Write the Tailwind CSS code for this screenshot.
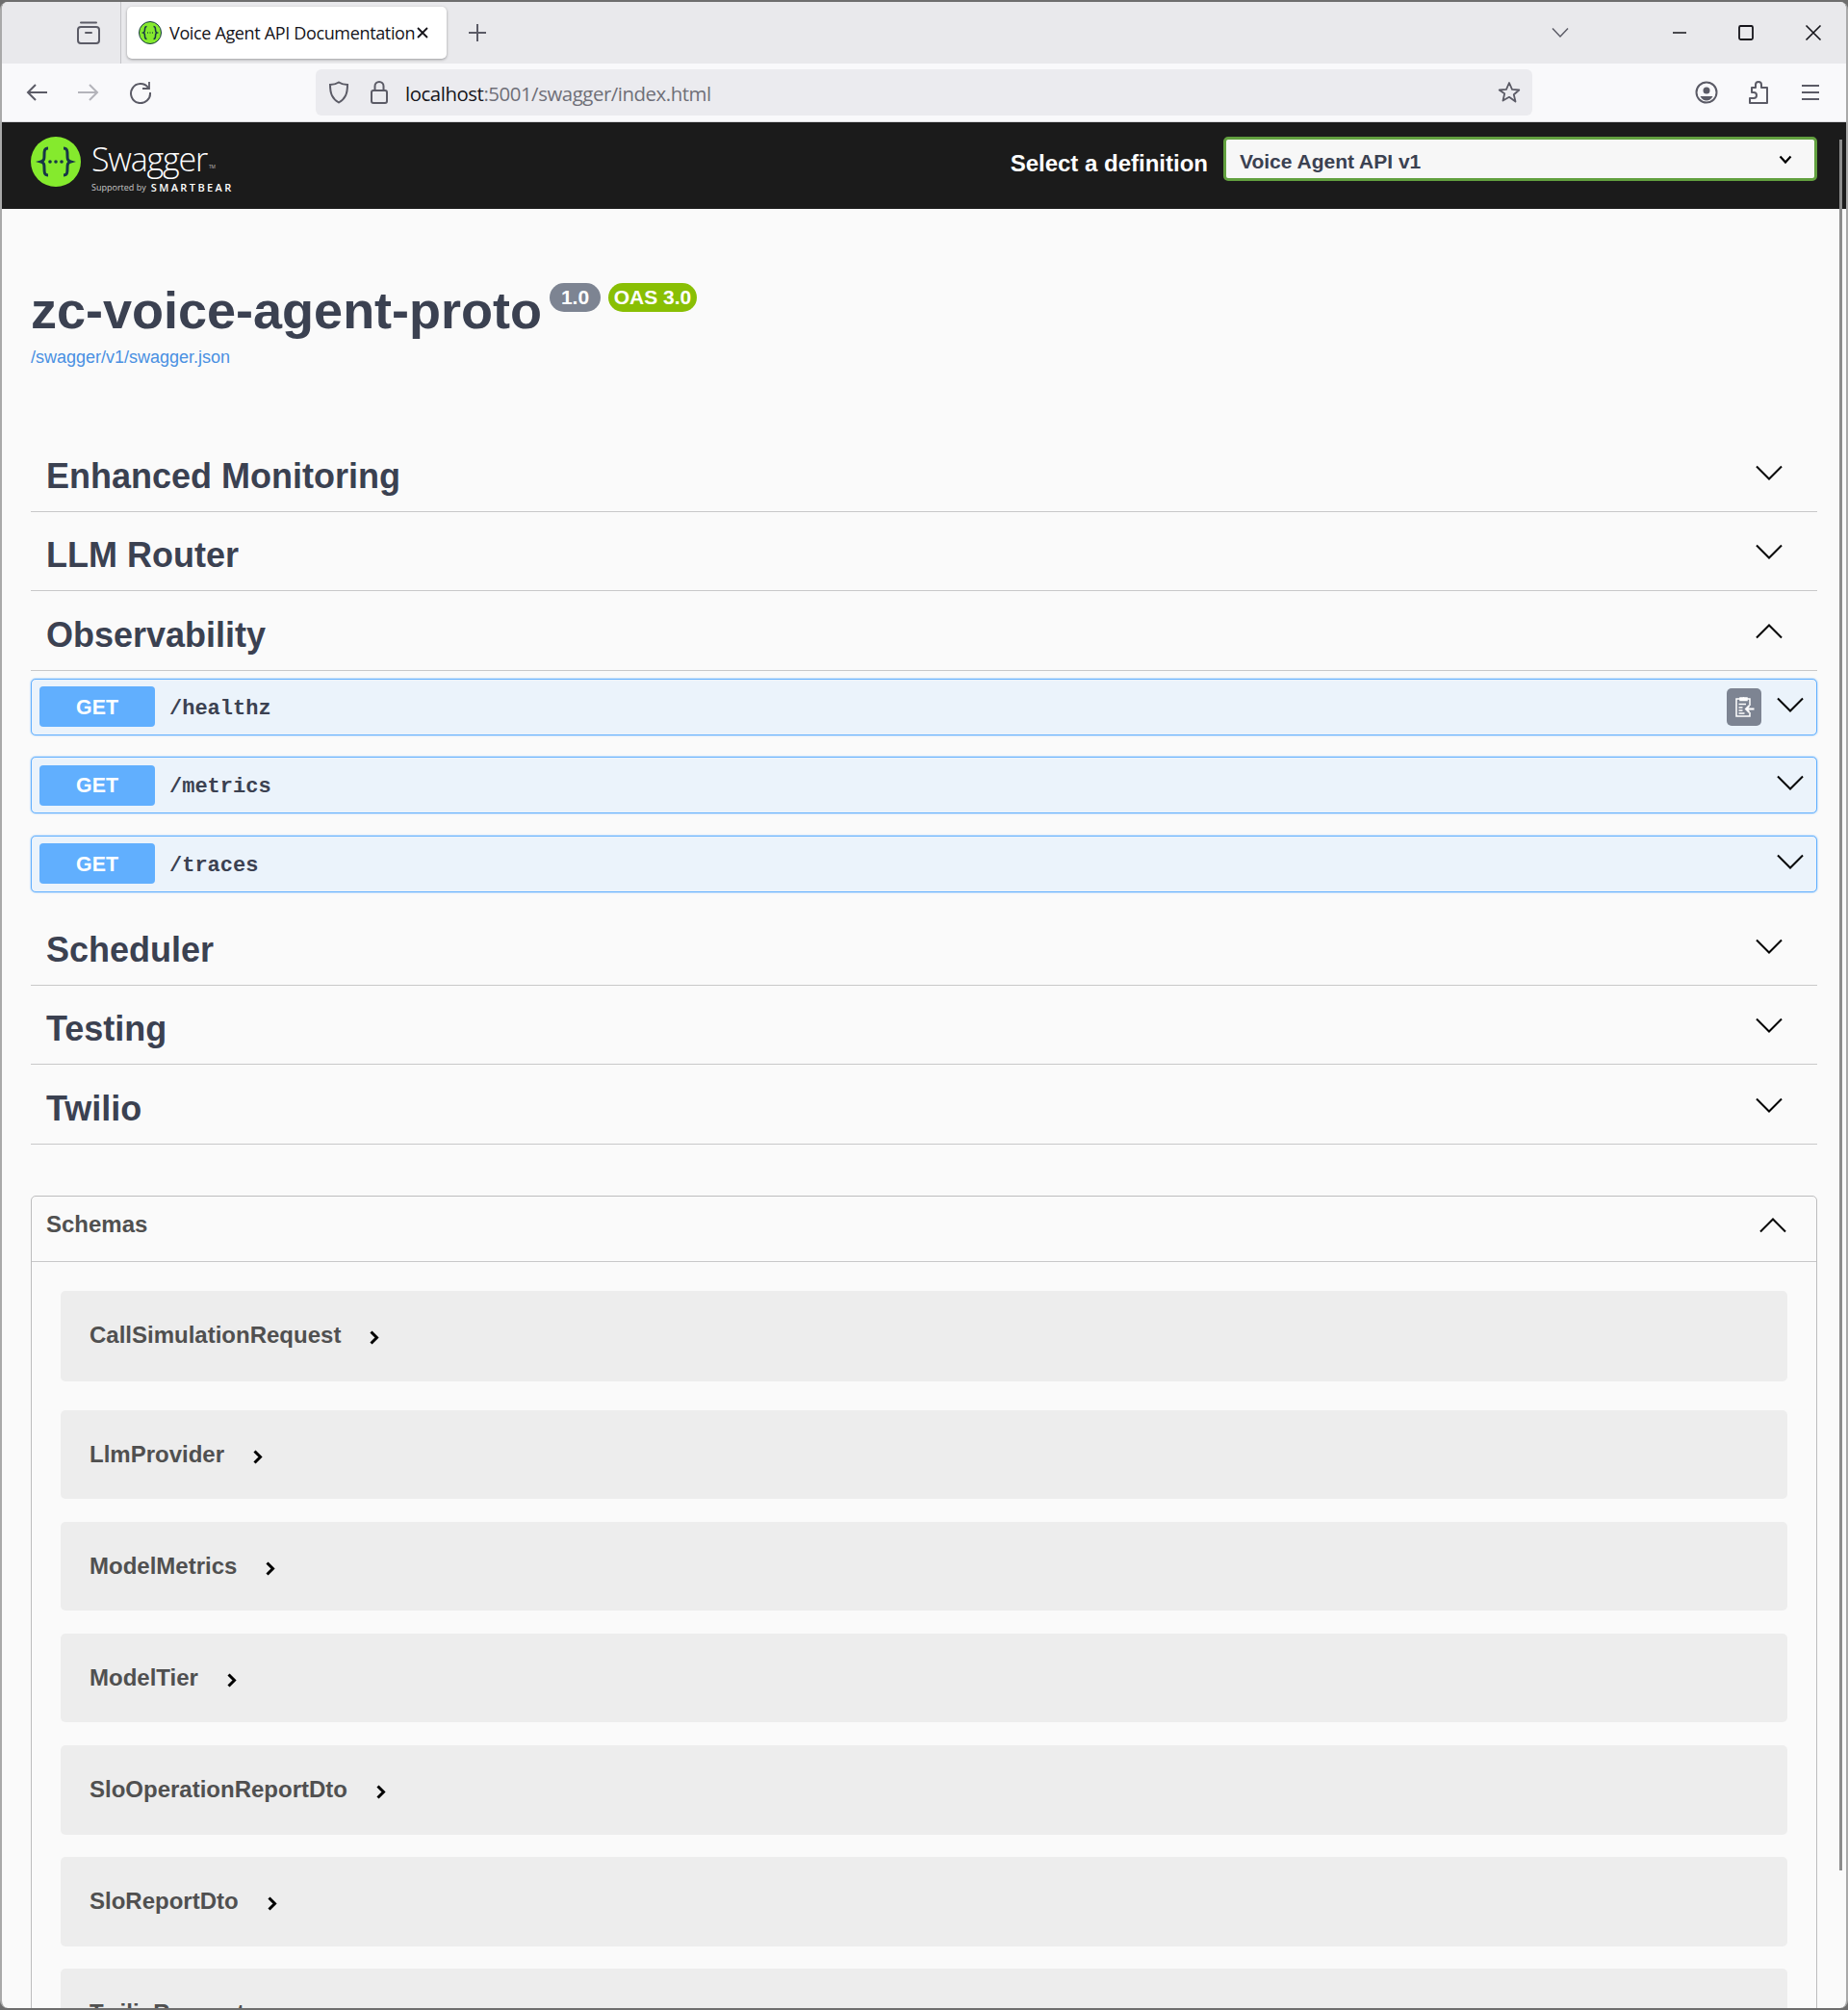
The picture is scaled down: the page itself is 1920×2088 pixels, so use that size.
<!DOCTYPE html>
<html lang="en">
  <head>
    <meta charset="UTF-8" />
    <meta name="viewport" content="width=device-width, initial-scale=1.0" />
    <title>Voice Agent API Documentation</title>
    <script src="https://cdn.jsdelivr.net/npm/@tailwindcss/browser@4"></script>
  </head>

  <body class="bg-[#6e6e6e] font-['Liberation_Sans',Arial,sans-serif]">
    <div class="relative h-[2088px] w-[1920px] overflow-hidden pt-[2px] pb-[2px]">
      <div class="flex h-full flex-col overflow-hidden rounded-[8px] border-x-2 border-l-[#a9a9a9] border-r-[#a9a9a9] bg-[#fafafa]">

        <!-- tab strip -->
        <div class="flex h-[64px] shrink-0 items-center bg-[#e9e9ec] font-['Open_Sans',sans-serif]">
          <div class="flex h-full w-[124px] items-center justify-end border-r border-[#c4c4c8] py-[4px] pr-[20px]">
            <svg class="h-[26px] w-[26px] text-[#5b5b66]" viewBox="0 0 26 26" fill="none" stroke="currentColor" stroke-width="2"><path d="M5 2.500h16" stroke-linecap="round"/><rect x="2" y="7" width="22" height="17" rx="3"/><path d="M10 13h6" stroke-linecap="round"/></svg>
          </div>
          <div class="ml-[6px] flex h-[54px] w-[332px] items-center rounded-[5px] bg-white pl-[12px] shadow-[0_1px_3px_rgba(0,0,0,0.35)]">
            <svg class="h-[24px] w-[24px] shrink-0" viewBox="0 0 24 24"><circle cx="12" cy="12" r="11.500" fill="#85ea2d" stroke="#173647"/><path d="M8.500 5.500c-2 0-2 1.500-2 3s0 3-1.500 3.500c1.500 .5 1.500 2 1.500 3.500s0 3 2 3M15.500 5.500c2 0 2 1.500 2 3s0 3 1.500 3.500c-1.500 .5-1.500 2-1.500 3.500s0 3-2 3" fill="none" stroke="#173647" stroke-width="1.500"/><path d="M9 12h.8M11.600 12h.8M14.200 12h.8" stroke="#173647" stroke-width="1.500"/></svg>
            <span class="ml-[8px] w-[254px] shrink-0 text-[18px] leading-none tracking-[-0.35px] whitespace-nowrap text-[#15141a]">Voice Agent API Documentation</span>
            <svg class="ml-[2px] h-[14px] w-[14px] shrink-0 text-[#15141a]" viewBox="0 0 14 14" fill="none" stroke="currentColor" stroke-width="1.800"><path d="M2 2l10 10M12 2L2 12"/></svg>
          </div>
          <svg class="ml-[22px] h-[20px] w-[20px] text-[#5b5b66]" viewBox="0 0 20 20" fill="none" stroke="currentColor" stroke-width="2"><path d="M10 1v18M1 10h18"/></svg>
          <svg class="ml-[1105px] h-[12px] w-[20px] text-[#5b5b66]" viewBox="0 0 20 12" fill="none" stroke="currentColor" stroke-width="1.500"><path d="M2 1.500l8 8.500 8-8.500"/></svg>
          <svg class="ml-[105px] h-[14px] w-[18px] text-[#15141a]" viewBox="0 0 18 14" fill="none" stroke="currentColor" stroke-width="1.500"><path d="M2 7h14"/></svg>
          <svg class="ml-[51px] h-[18px] w-[18px] text-[#15141a]" viewBox="0 0 18 18" fill="none" stroke="currentColor" stroke-width="1.800"><rect x="2" y="2" width="14" height="14" rx="1.500"/></svg>
          <svg class="ml-[52px] h-[18px] w-[18px] text-[#15141a]" viewBox="0 0 18 18" fill="none" stroke="currentColor" stroke-width="1.600"><path d="M1.500 1.500l15 15M16.500 1.500l-15 15"/></svg>
        </div>

        <!-- address bar row -->
        <div class="flex h-[61px] shrink-0 items-center border-b border-[#d8d8dc] bg-[#f9f9fb] font-['Open_Sans',sans-serif] text-[#5b5b66]">
          <svg class="ml-[24px] h-[22px] w-[24px]" viewBox="0 0 24 22" fill="none" stroke="currentColor" stroke-width="2"><path d="M23 11H3M11 3l-8 8 8 8"/></svg>
          <svg class="ml-[30px] h-[22px] w-[24px] text-[#b4b4ba]" viewBox="0 0 24 22" fill="none" stroke="currentColor" stroke-width="2"><path d="M1 11h20M13 3l8 8-8 8"/></svg>
          <svg class="ml-[30px] h-[24px] w-[24px]" viewBox="0 0 24 24" fill="none" stroke="currentColor" stroke-width="2"><path d="M20 7A10 10 0 1 0 22 12"/><path d="M21 1v7h-7" stroke-width="1.800"/></svg>
          <div class="ml-[170px] flex h-[48px] w-[1264px] items-center rounded-[6px] bg-[#ebebef]">
            <svg class="ml-[13px] h-[24px] w-[22px]" viewBox="0 0 22 24" fill="none" stroke="currentColor" stroke-width="2"><path d="M11 1.500c3 2 6 2.500 9 2.500 0 9-2 14.500-9 18.500C4 18.500 2 13 2 4c3 0 6-.5 9-2.500z"/></svg>
            <svg class="ml-[21px] h-[26px] w-[20px]" viewBox="0 0 20 26" fill="none" stroke="currentColor" stroke-width="2"><rect x="2" y="11" width="16" height="13" rx="2"/><path d="M5.500 11V6.500a4.500 4.500 0 0 1 9 0V11"/></svg>
            <span class="mt-[2px] ml-[17px] text-[20.400px] leading-none tracking-[-0.45px] whitespace-nowrap text-[#15141a]">localhost<span class="text-[#6f6f78]">:5001/swagger/index.html</span></span>
            <svg class="mr-[12px] ml-auto h-[24px] w-[24px]" viewBox="0 0 24 24" fill="none" stroke="currentColor" stroke-width="1.800" stroke-linejoin="round"><path d="M12 2l3 6.800 7.300.7-5.500 4.800 1.700 7.200L12 16.800 5.500 20.500l1.700-7.200L1.700 9.500 9 8.800z"/></svg>
          </div>
          <svg class="ml-[169px] h-[24px] w-[24px]" viewBox="0 0 24 24"><circle cx="12" cy="12" r="10.500" fill="none" stroke="currentColor" stroke-width="2"/><circle cx="12" cy="10" r="3.500" fill="currentColor"/><path d="M5.500 16h13c-1.500 3-4 4.500-6.500 4.500S7 19 5.500 16z" fill="currentColor"/></svg>
          <svg class="ml-[31px] h-[26px] w-[22px]" viewBox="0 0 22 26" fill="none" stroke="currentColor" stroke-width="2" stroke-linejoin="round"><path d="M2 24h18V8h-6V5a3 3 0 0 0-6 0v3H4v5h2a2.500 2.500 0 0 1 0 6H2z"/></svg>
          <svg class="ml-[33px] h-[20px] w-[20px]" viewBox="0 0 20 20" fill="none" stroke="currentColor" stroke-width="2"><path d="M1 3h18M1 10h18M1 17h18"/></svg>
        </div>

        <!-- swagger top bar -->
        <div class="flex h-[90px] shrink-0 items-start justify-between bg-[#1b1b1b] px-[30px] pt-[15px]">
          <div class="flex items-start">
            <svg class="h-[52px] w-[52px]" viewBox="0 0 52 52"><circle cx="26" cy="26" r="26" fill="#85ea2d"/><path d="M18 12c-4 0-4 3-4 7s0 6-3.500 7c3.500 1 3.500 3 3.500 7s0 7 4 7M34 12c4 0 4 3 4 7s0 6 3.500 7c-3.500 1-3.500 3-3.500 7s0 7-4 7" fill="none" stroke="#173647" stroke-width="3"/><circle cx="20" cy="26" r="1.800" fill="#173647"/><circle cx="26" cy="26" r="1.800" fill="#173647"/><circle cx="32" cy="26" r="1.800" fill="#173647"/></svg>
            <div class="mt-[4px] ml-[11px] flex flex-col text-white">
              <div class="flex items-end font-['Open_Sans',sans-serif] text-[34px] leading-[38px] font-light tracking-[-1.200px]">Swagger<span class="mb-[8px] ml-[2px] text-[5px] leading-none tracking-normal">TM</span></div>
              <div class="mt-[5px] flex items-center font-['Open_Sans',sans-serif] leading-none">
                <span class="text-[9px] text-[#c8c8c8]">Supported by</span>
                <span class="ml-[5px] text-[11px] font-semibold tracking-[2.400px]">SMARTBEAR</span>
              </div>
            </div>
          </div>
          <div class="flex items-center pt-[7px]">
            <span class="mt-[2px] mr-[16px] text-[24px] font-bold text-white">Select a definition</span>
            <div class="-mt-[7px] flex h-[46px] w-[617px] items-center justify-between rounded-[5px] border-[3px] border-[#62a03f] bg-[#f7f7f7] pr-[23px] pl-[14px] text-[21px] font-bold text-[#3b4151]">
              <span class="pt-[5px]">Voice Agent API v1</span>
              <svg class="mt-[1px] h-[10px] w-[14px]" viewBox="0 0 14 10" fill="none" stroke="#000" stroke-width="2.200"><path d="M1.500 1.500L7 7.500l5.500-6"/></svg>
            </div>
          </div>
        </div>

        <!-- page body -->
        <div class="px-[30px] text-[#3b4151]">
          <div class="h-[232px] pt-[69px]">
            <div class="flex items-start">
              <h1 class="text-[54px] leading-[73px] font-bold">zc-voice-agent-proto</h1>
              <span class="mt-[8px] ml-[8px] flex h-[30px] w-[53px] items-center justify-center rounded-[30px] bg-[#7d8492] text-[21px] font-bold text-white">1.0</span>
              <span class="mt-[8px] ml-[8px] flex h-[30px] w-[92px] items-center justify-center rounded-[30px] bg-[#89bf04] text-[21px] font-bold text-white">OAS 3.0</span>
            </div>
            <a class="block text-[18px] leading-[24px] text-[#4990e2]">/swagger/v1/swagger.json</a>
          </div>

          <div class="flex h-[82.500px] items-center justify-between border-b border-[#c8c8c9] pr-[36px] pl-[16px]">
            <h3 class="mt-[10px] text-[36px] font-bold">Enhanced Monitoring</h3>
            <svg class="mt-[2px] h-[16px] w-[28px]" viewBox="0 0 28 16" fill="none" stroke="#000" stroke-width="2"><path d="M1 1.500l13 13 13-13"/></svg>
          </div>
          <div class="flex h-[82.500px] items-center justify-between border-b border-[#c8c8c9] pr-[36px] pl-[16px]">
            <h3 class="mt-[10px] text-[36px] font-bold">LLM Router</h3>
            <svg class="mt-[2px] h-[16px] w-[28px]" viewBox="0 0 28 16" fill="none" stroke="#000" stroke-width="2"><path d="M1 1.500l13 13 13-13"/></svg>
          </div>
          <div class="flex h-[82.500px] items-center justify-between border-b border-[#c8c8c9] pr-[36px] pl-[16px]">
            <h3 class="mt-[10px] text-[36px] font-bold">Observability</h3>
            <svg class="mt-[2px] h-[16px] w-[28px]" viewBox="0 0 28 16" fill="none" stroke="#000" stroke-width="2"><path d="M1 14.500l13-13 13 13"/></svg>
          </div>

          <!-- operations -->
          <div class="mt-[8px] flex h-[59px] items-center rounded-[5px] border border-[#61affe] bg-[#ebf3fb] pr-[13px] pl-[8px] shadow-[0_0_2px_rgba(97,175,254,0.8)]">
            <span class="flex h-[42px] w-[120px] items-center justify-center rounded-[4px] bg-[#61affe] pt-[3px] text-[21.300px] font-bold text-white">GET</span>
            <span class="mt-[4px] ml-[15px] font-['Liberation_Mono',monospace] text-[22px] font-bold">/healthz</span>
            <span class="mr-[16px] ml-auto flex h-[39px] w-[36px] items-center justify-center rounded-[5px] bg-[#7d8492]">
              <svg class="h-[24px] w-[21px]" viewBox="0 0 21 24" fill="none" stroke="#fff" stroke-width="1.500"><path d="M6 4H2v18h14v-4M16 11V4h-4"/><path d="M6 5.500V3h2.500a1.800 1.800 0 0 1 2 0H13v2.500z" fill="#fff"/><path d="M4.500 9.500H12M4.500 13h4M4.500 16h4M4.500 19h6"/><path d="M20.500 14.500H12M15.500 11l-3.500 3.500 3.500 3.500" stroke-width="2"/></svg>
            </span>
            <svg class="mb-[5px] h-[16px] w-[28px]" viewBox="0 0 28 16" fill="none" stroke="#000" stroke-width="2"><path d="M1 1.500l13 13 13-13"/></svg>
          </div>
          <div class="mt-[22.500px] flex h-[59px] items-center rounded-[5px] border border-[#61affe] bg-[#ebf3fb] pr-[13px] pl-[8px] shadow-[0_0_2px_rgba(97,175,254,0.8)]">
            <span class="flex h-[42px] w-[120px] items-center justify-center rounded-[4px] bg-[#61affe] pt-[3px] text-[21.300px] font-bold text-white">GET</span>
            <span class="mt-[4px] ml-[15px] font-['Liberation_Mono',monospace] text-[22px] font-bold">/metrics</span>
            <svg class="mb-[5px] ml-auto h-[16px] w-[28px]" viewBox="0 0 28 16" fill="none" stroke="#000" stroke-width="2"><path d="M1 1.500l13 13 13-13"/></svg>
          </div>
          <div class="mt-[22.500px] flex h-[59px] items-center rounded-[5px] border border-[#61affe] bg-[#ebf3fb] pr-[13px] pl-[8px] shadow-[0_0_2px_rgba(97,175,254,0.8)]">
            <span class="flex h-[42px] w-[120px] items-center justify-center rounded-[4px] bg-[#61affe] pt-[3px] text-[21.300px] font-bold text-white">GET</span>
            <span class="mt-[4px] ml-[15px] font-['Liberation_Mono',monospace] text-[22px] font-bold">/traces</span>
            <svg class="mb-[5px] ml-auto h-[16px] w-[28px]" viewBox="0 0 28 16" fill="none" stroke="#000" stroke-width="2"><path d="M1 1.500l13 13 13-13"/></svg>
          </div>

          <div class="mt-[14.500px] flex h-[82.500px] items-center justify-between border-b border-[#c8c8c9] pr-[36px] pl-[16px]">
            <h3 class="mt-[10px] text-[36px] font-bold">Scheduler</h3>
            <svg class="mt-[2px] h-[16px] w-[28px]" viewBox="0 0 28 16" fill="none" stroke="#000" stroke-width="2"><path d="M1 1.500l13 13 13-13"/></svg>
          </div>
          <div class="flex h-[82.500px] items-center justify-between border-b border-[#c8c8c9] pr-[36px] pl-[16px]">
            <h3 class="mt-[10px] text-[36px] font-bold">Testing</h3>
            <svg class="mt-[2px] h-[16px] w-[28px]" viewBox="0 0 28 16" fill="none" stroke="#000" stroke-width="2"><path d="M1 1.500l13 13 13-13"/></svg>
          </div>
          <div class="flex h-[82.500px] items-center justify-between border-b border-[#c8c8c9] pr-[36px] pl-[16px]">
            <h3 class="mt-[10px] text-[36px] font-bold">Twilio</h3>
            <svg class="mt-[2px] h-[16px] w-[28px]" viewBox="0 0 28 16" fill="none" stroke="#000" stroke-width="2"><path d="M1 1.500l13 13 13-13"/></svg>
          </div>

          <!-- schemas -->
          <div class="mt-[53px] rounded-[5px] border border-[#bdbdbe] text-[#505050]">
            <div class="flex h-[68px] items-center justify-between border-b border-[#c8c8c9] pr-[31px] pl-[15px]">
              <span class="mb-[8px] text-[24px] font-bold">Schemas</span>
              <svg class="mb-[6px] h-[16px] w-[28px]" viewBox="0 0 28 16" fill="none" stroke="#000" stroke-width="2"><path d="M1 14.500l13-13 13 13"/></svg>
            </div>
            <div class="flex flex-col px-[30px] pt-[30px]">
              <div class="mb-[30px] flex h-[94px] items-start rounded-[5px] bg-[#ededed] pt-[32px] pl-[30px] text-[24px] font-bold">
                <span class="leading-[28px]">CallSimulationRequest</span>
                <svg class="mt-[9px] ml-[30px] h-[15px] w-[10px]" viewBox="0 0 10 15" fill="none" stroke="#000" stroke-width="3"><path d="M1.500 1.500l6 6-6 6"/></svg>
              </div>
              <div class="mb-[24px] flex h-[92px] items-start rounded-[5px] bg-[#ededed] pt-[32px] pl-[30px] text-[24px] font-bold">
                <span class="leading-[28px]">LlmProvider</span>
                <svg class="mt-[9px] ml-[30px] h-[15px] w-[10px]" viewBox="0 0 10 15" fill="none" stroke="#000" stroke-width="3"><path d="M1.500 1.500l6 6-6 6"/></svg>
              </div>
              <div class="mb-[24px] flex h-[92px] items-start rounded-[5px] bg-[#ededed] pt-[32px] pl-[30px] text-[24px] font-bold">
                <span class="leading-[28px]">ModelMetrics</span>
                <svg class="mt-[9px] ml-[30px] h-[15px] w-[10px]" viewBox="0 0 10 15" fill="none" stroke="#000" stroke-width="3"><path d="M1.500 1.500l6 6-6 6"/></svg>
              </div>
              <div class="mb-[24px] flex h-[92px] items-start rounded-[5px] bg-[#ededed] pt-[32px] pl-[30px] text-[24px] font-bold">
                <span class="leading-[28px]">ModelTier</span>
                <svg class="mt-[9px] ml-[30px] h-[15px] w-[10px]" viewBox="0 0 10 15" fill="none" stroke="#000" stroke-width="3"><path d="M1.500 1.500l6 6-6 6"/></svg>
              </div>
              <div class="mb-[23px] flex h-[93px] items-start rounded-[5px] bg-[#ededed] pt-[32px] pl-[30px] text-[24px] font-bold">
                <span class="leading-[28px]">SloOperationReportDto</span>
                <svg class="mt-[9px] ml-[30px] h-[15px] w-[10px]" viewBox="0 0 10 15" fill="none" stroke="#000" stroke-width="3"><path d="M1.500 1.500l6 6-6 6"/></svg>
              </div>
              <div class="mb-[23px] flex h-[93px] items-start rounded-[5px] bg-[#ededed] pt-[32px] pl-[30px] text-[24px] font-bold">
                <span class="leading-[28px]">SloReportDto</span>
                <svg class="mt-[9px] ml-[30px] h-[15px] w-[10px]" viewBox="0 0 10 15" fill="none" stroke="#000" stroke-width="3"><path d="M1.500 1.500l6 6-6 6"/></svg>
              </div>
              <div class="mb-[24px] flex h-[92px] items-start rounded-[5px] bg-[#ededed] pt-[32px] pl-[30px] text-[24px] font-bold">
                <span class="leading-[28px]">TwilioRequest</span>
              </div>
            </div>
          </div>
        </div>
      </div>

      <!-- overlay scrollbar -->
      <div class="absolute top-[145px] left-[1911px] h-[1798px] w-[3px] bg-[#8c8c8c]"></div>
    </div>
  </body>
</html>
